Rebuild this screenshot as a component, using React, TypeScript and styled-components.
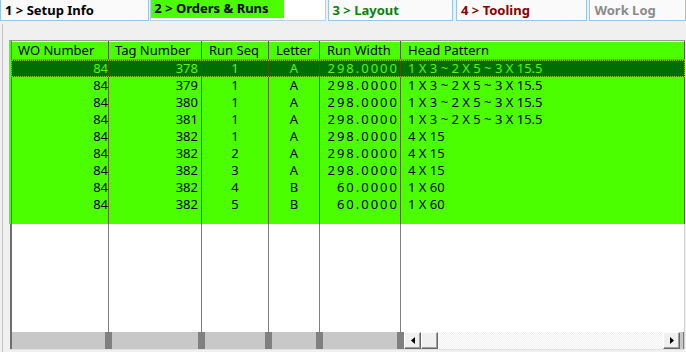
import * as React from "react";
import styled, { createGlobalStyle, css } from "styled-components";

const green = "#4cff00";
const sel_bg = "#006e00";
const sel_text = "#5cf500";
const olive_line = "#5a6a00";
const grid_line = "#808080";
const tab_border = "#94c6ee";

const GlobalStyle = createGlobalStyle`
  html, body {
    margin: 0;
    padding: 0;
    background: #f0f0f0;
    font-family: "Noto Sans", "Liberation Sans", sans-serif;
  }
  #root {
    width: 686px;
    height: 352px;
    overflow: hidden;
  }
`;

const Root = styled.div`
  width: 686px;
  height: 352px;
  display: flex;
  flex-direction: column;
  background: #f0f0f0;
`;

// ---- tabs ----

const TabBar = styled.div`
  height: 21px;
  display: flex;
  flex-shrink: 0;
`;

const Tab = styled.div<{ $width: number; $gap: number; $color: string }>`
  width: ${(p) => p.$width}px;
  margin-left: ${(p) => p.$gap}px;
  box-sizing: border-box;
  height: 21px;
  border: 1px solid ${tab_border};
  border-top: none;
  background: #fafafa;
  color: ${(p) => p.$color};
  font-size: 13px;
  font-weight: 700;
  line-height: 19px;
  padding: 1px 0 0 4px;
  white-space: nowrap;
  overflow: hidden;
`;

const ActiveTab = styled.div<{ $width: number; $gap: number }>`
  width: ${(p) => p.$width}px;
  margin-left: ${(p) => p.$gap}px;
  box-sizing: border-box;
  height: 21px;
  border: 1px solid #b9cfe2;
  border-top: none;
  background: #ffffff;
`;

const ActiveLabel = styled.div`
  width: 133px;
  height: 18px;
  background: ${green};
  color: #000;
  font-size: 13px;
  font-weight: 700;
  line-height: 17px;
  padding-left: 3px;
  box-sizing: border-box;
  white-space: nowrap;
`;

// ---- panel + grid ----

const Panel = styled.div`
  flex: 1;
  margin: 3px 0 0 2px;
  border-left: 1px solid #c4c4c4;
  padding: 16px 0 0 6px;
`;

const Grid = styled.div`
  width: 676px;
  border-top: 1px solid #9a9a9a;
  border-bottom: 1px solid #e2e2e2;
  font-size: 13px;
  color: #000;
`;

const Filled = styled.div`
  background: ${green};
  padding-left: 2px;
`;

const Row = styled.div<{ $height: number; $selected?: boolean }>`
  display: flex;
  height: ${(p) => p.$height}px;
  line-height: ${(p) => p.$height}px;
  border-left: 1px solid ${olive_line};
  ${(p) =>
    p.$selected &&
    css`
      background: ${sel_bg};
      color: ${sel_text};
      outline: 1px dotted #8fc400;
      outline-offset: -1px;
    `}
`;

const HeaderRow = styled(Row)`
  border-left: 1px solid #6a6a6a;
  box-shadow: inset 0 1px 0 #d9ffc4;
  border-bottom: 1px solid #3ccc00;
`;

const Cell = styled.div<{
  $width?: number;
  $align: string;
  $padR: number;
  $line: string;
  $spacing?: number;
}>`
  ${(p) => (p.$width ? `width: ${p.$width}px;` : "flex: 1;")}
  flex-shrink: 0;
  box-sizing: border-box;
  border-right: 1px solid ${(p) => p.$line};
  text-align: ${(p) => p.$align};
  letter-spacing: ${(p) => p.$spacing ?? 0}px;
  padding: 0 ${(p) => p.$padR}px 0 ${(p) => (p.$align === "left" ? 7 : 0)}px;
  white-space: nowrap;
  overflow: visible;
`;

const HeadCell = styled.div<{ $width?: number; $pad: number }>`
  ${(p) => (p.$width ? `width: ${p.$width}px;` : "flex: 1;")}
  flex-shrink: 0;
  box-sizing: border-box;
  border-right: 1px solid #5a5a5a;
  padding-left: ${(p) => p.$pad}px;
  white-space: nowrap;
  overflow: hidden;
`;

const Empty = styled.div`
  margin-left: 1px;
  border-left: 2px solid #6e6e6e;
  border-right: 1px solid #cfcfcf;
  background: #fff;
`;

const EmptyRow = styled.div`
  display: flex;
  height: 108px;
`;

const Footer = styled.div`
  display: flex;
  height: 17px;
  background: #c8c8c8;
`;

const FootSeg = styled.div<{ $width: number; $dark?: boolean }>`
  width: ${(p) => p.$width}px;
  flex-shrink: 0;
  background: ${(p) => (p.$dark ? "#808080" : "#c8c8c8")};
`;

const HScroll = styled.div`
  flex: 1;
  display: flex;
  border-right: 1px solid #7a7a7a;
`;

const ScrollButton = styled.div`
  width: 17px;
  height: 17px;
  box-sizing: border-box;
  background: #f0f0f0;
  border-top: 1px solid #ffffff;
  border-left: 1px solid #ffffff;
  border-right: 1px solid #696969;
  border-bottom: 1px solid #696969;
  box-shadow: inset -1px -1px 0 #a0a0a0;
  display: flex;
  align-items: center;
  justify-content: center;
`;

const Track = styled.div`
  flex: 1;
  background-color: #ffffff;
  background-image: repeating-conic-gradient(#f0f0f0 0% 25%, #ffffff 0% 50%);
  background-size: 2px 2px;
`;

const TrackEnd = styled.div`
  width: 3px;
  background: #c8c8c8;
`;

type Col = {
  title: string;
  width?: number;
  align: "left" | "right" | "center";
  padR: number;
  headPad: number;
  spacing?: number;
};

const columns: Col[] = [
  { title: "WO Number", width: 97, align: "right", padR: 0, headPad: 6 },
  { title: "Tag Number", width: 93, align: "right", padR: 3, headPad: 6 },
  { title: "Run Seq", width: 67, align: "center", padR: 0, headPad: 7 },
  { title: "Letter", width: 51, align: "center", padR: 0, headPad: 7 },
  { title: "Run Width", width: 81, align: "right", padR: 1, headPad: 7, spacing: 2 },
  { title: "Head Pattern", align: "left", padR: 0, headPad: 7 },
];

const p1 = "1 X 3 ~ 2 X 5 ~ 3 X 15.5";

const rows: string[][] = [
  ["84", "378", "1", "A", "298.0000", p1],
  ["84", "379", "1", "A", "298.0000", p1],
  ["84", "380", "1", "A", "298.0000", p1],
  ["84", "381", "1", "A", "298.0000", p1],
  ["84", "382", "1", "A", "298.0000", "4 X 15"],
  ["84", "382", "2", "A", "298.0000", "4 X 15"],
  ["84", "382", "3", "A", "298.0000", "4 X 15"],
  ["84", "382", "4", "B", "60.0000", "1 X 60"],
  ["84", "382", "5", "B", "60.0000", "1 X 60"],
];

// light / dark strips under the columns
const footer_segs = [
  { w: 93 },
  { w: 7, dark: true },
  { w: 86 },
  { w: 7, dark: true },
  { w: 60 },
  { w: 7, dark: true },
  { w: 44 },
  { w: 7, dark: true },
  { w: 74 },
  { w: 7, dark: true },
];

const Arrow = ({ dir }: { dir: "left" | "right" }) => (
  <svg width="4" height="7" viewBox="0 0 4 7">
    {dir === "left" ? (
      <polygon points="4,0 4,7 0,3.5" fill="#000" />
    ) : (
      <polygon points="0,0 0,7 4,3.5" fill="#000" />
    )}
  </svg>
);

const App = () => {
  return (
    <Root>
      <GlobalStyle />
      <TabBar>
        <Tab $width={150} $gap={0} $color="#000">
          1 &gt; Setup Info
        </Tab>
        <ActiveTab $width={176} $gap={1}>
          <ActiveLabel>2 &gt; Orders &amp; Runs</ActiveLabel>
        </ActiveTab>
        <Tab $width={126} $gap={2} $color="#0a820a">
          3 &gt; Layout
        </Tab>
        <Tab $width={132} $gap={3} $color="#8b0000">
          4 &gt; Tooling
        </Tab>
        <Tab $width={97} $gap={2} $color="#8a8a8a">
          Work Log
        </Tab>
      </TabBar>
      <Panel>
        <Grid>
          <Filled>
            <HeaderRow $height={18}>
              {columns.map((c) => (
                <HeadCell key={c.title} $width={c.width} $pad={c.headPad}>
                  {c.title}
                </HeadCell>
              ))}
            </HeaderRow>
            {rows.map((r, i) => (
              <Row key={i} $height={17} $selected={i === 0}>
                {columns.map((c, j) => (
                  <Cell
                    key={j}
                    $width={c.width}
                    $align={c.align}
                    $padR={c.padR}
                    $spacing={c.spacing}
                    $line={i === 0 ? "#3d5a00" : olive_line}
                  >
                    {r[j]}
                  </Cell>
                ))}
              </Row>
            ))}
            <Row $height={11}>
              {columns.map((c, j) => (
                <Cell key={j} $width={c.width} $align={c.align} $padR={0} $line={olive_line} />
              ))}
            </Row>
          </Filled>
          <Empty>
            <EmptyRow>
              {columns.map((c, j) => (
                <Cell key={j} $width={c.width} $align={c.align} $padR={0} $line={j === 5 ? "transparent" : grid_line} />
              ))}
            </EmptyRow>
            <Footer>
              {footer_segs.map((s, i) => (
                <FootSeg key={i} $width={s.w} $dark={s.dark} />
              ))}
              <HScroll>
                <ScrollButton>
                  <Arrow dir="left" />
                </ScrollButton>
                <ScrollButton />
                <Track />
                <ScrollButton>
                  <Arrow dir="right" />
                </ScrollButton>
                <TrackEnd />
              </HScroll>
            </Footer>
          </Empty>
        </Grid>
      </Panel>
    </Root>
  );
};

export default App;
